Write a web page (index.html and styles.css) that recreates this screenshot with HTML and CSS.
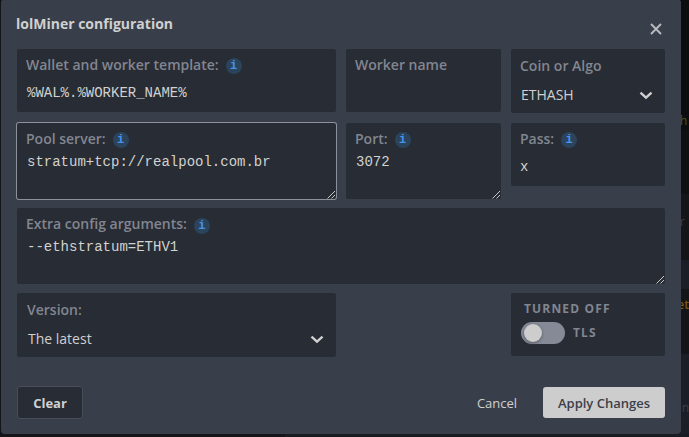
FILE: index.html
```html
<!DOCTYPE html>
<html lang="en">
<head>
<meta charset="utf-8">
<title>lolMiner configuration</title>
<link rel="stylesheet" href="styles.css">
</head>
<body>
<svg width="0" height="0" class="defs">
  <symbol id="grip" viewBox="0 0 9 9"><path d="M0.5 8.5L8 1M4.5 8.5L8 5" fill="none" stroke="#c8c8c8" stroke-width="1"/></symbol>
  <symbol id="chevron" viewBox="0 0 14 9"><path d="M1.5 1.6L7 6.6L12.5 1.6" fill="none" stroke="#d2d2d2" stroke-width="2.3"/></symbol>
</svg>
<div class="backdrop" aria-hidden="true">
  <span class="band band-a"></span>
  <span class="band band-b"></span>
  <span class="band band-c"></span>
  <span class="band band-d"></span>
  <span class="band band-e"></span>
  <span class="peek peek-green">h</span>
  <span class="peek peek-grey">r</span>
  <span class="peek peek-gold">et</span>
  <span class="peek peek-nin">in</span>
</div>
<main class="dialog">
  <header class="head">
    <h1>lolMiner configuration</h1>
    <svg class="close" viewBox="0 0 12 12"><path d="M1 1L11 11M11 1L1 11" fill="none" stroke="#b9bbbe" stroke-width="1.9"/></svg>
  </header>
  <form class="grid">
    <section class="field">
      <div class="label">Wallet and worker template:<i class="info">i</i></div>
      <div class="value">%WAL%.%WORKER_NAME%</div>
    </section>
    <section class="field"><div class="label">Worker name</div></section>
    <section class="field select">
      <div class="label">Coin or Algo</div>
      <div class="choice">ETHASH<svg class="chev"><use href="#chevron"/></svg></div>
    </section>

    <section class="field area focused">
      <div class="label">Pool server:<i class="info">i</i></div>
      <div class="value">stratum+tcp://realpool.com.br</div>
      <svg class="grip"><use href="#grip"/></svg>
    </section>
    <section class="field area">
      <div class="label">Port:<i class="info">i</i></div>
      <div class="value">3072</div>
      <svg class="grip"><use href="#grip"/></svg>
    </section>
    <section class="field pass">
      <div class="label">Pass:<i class="info">i</i></div>
      <div class="value">x</div>
    </section>

    <section class="field area wide">
      <div class="label">Extra config arguments:<i class="info">i</i></div>
      <div class="value">--ethstratum=ETHV1</div>
      <svg class="grip"><use href="#grip"/></svg>
    </section>

    <section class="field select">
      <div class="label">Version:</div>
      <div class="choice version">The latest<svg class="chev"><use href="#chevron"/></svg></div>
    </section>
    <section class="field tls">
      <div class="caps">TURNED OFF</div>
      <div class="switch-row"><span class="switch"></span><span class="caps">TLS</span></div>
    </section>
  </form>
  <footer class="foot">
    <button class="btn clear">Clear</button>
    <button class="btn cancel">Cancel</button>
    <button class="btn apply">Apply Changes</button>
  </footer>
</main>
</body>
</html>
```

FILE: styles.css
```css
* { box-sizing: border-box; }
body {
  margin: 0;
  width: 689px;
  height: 437px;
  overflow: hidden;
  background: #131519;
  font: 14px/20px "Open Sans", "Noto Sans", sans-serif;
  color: #d0d0d0;
}
.defs { position: absolute; }
.backdrop { position: absolute; inset: 0; overflow: hidden; }
.band { position: absolute; left: 680px; right: 0; }
.band-a { top: 0; height: 130px; background: #0c0d0f; }
.band-b { top: 130px; height: 64px; background: #0f1012; }
.band-c { top: 260px; height: 29px; background: #1b1e26; }
.band-d { top: 353px; height: 84px; background: #1b1e26; border-top: 1px solid #15161a; }
.band-e { left: 285px; top: 434px; height: 3px; background: #191c23; }
.peek { position: absolute; font-size: 12px; white-space: nowrap; }
.peek-green { top: 111px; left: 680px; color: #41591c; }
.peek-grey { top: 212px; left: 680px; color: #3b3c3f; }
.peek-gold { top: 295px; right: 0; color: #7b5709; font-weight: 600; }
.peek-nin { top: 398px; right: 0; color: #3c3f45; }

.dialog {
  position: relative;
  width: 680px;
  height: 434px;
  margin-left: 1px;
  padding: 0 16px;
  background: #393f4a;
  border-radius: 2px 2px 4px 4px;
}
.head { display: flex; justify-content: space-between; height: 49px; padding-top: 14px; }
h1 { margin: 0 0 0 -1px; font-size: 14px; line-height: 20px; font-weight: 700; }
.close { width: 12px; height: 12px; margin: 9px 3px 0 0; }

.grid {
  display: grid;
  grid-template-columns: 319px 155px 154px;
  grid-template-rows: 65px 76px 76px 64px;
  column-gap: 10px;
  row-gap: 9px;
  align-items: start;
}
.field {
  position: relative;
  height: 63px;
  padding: 6px 9px 0;
  background: #282c34;
  border-radius: 2px;
}
.area { height: 76px; }
.focused { box-shadow: 0 0 0 1px #8b909c; }
.wide { grid-column: 1 / -1; }
.label { display: flex; align-items: center; color: #828691; font-weight: 600; white-space: nowrap; }
.info {
  width: 16px;
  height: 16px;
  margin: 2px 0 0 7px;
  border-radius: 50%;
  background: #2b445c;
  color: #4592ec;
  font: 700 12px/17px "Liberation Mono", monospace;
  text-align: center;
}
.wide .info { margin-top: 3px; margin-bottom: -1px; }
.value { margin: 8px 0 0 1px; font: 14px/20px "Liberation Mono", monospace; color: #d2d2ce; white-space: nowrap; }
.area .value { margin-top: 3px; }
.pass .value { margin-left: 0; }
.grip { position: absolute; right: 0; bottom: 0; width: 9px; height: 9px; }
.select { height: 64px; padding-top: 7px; padding-left: 10px; }
.grid > :nth-child(3) { padding-left: 9px; }
.choice { display: flex; justify-content: space-between; align-items: center; margin-top: 9px; padding-left: 1px; padding-right: 3px; }
.chev { width: 14px; height: 9px; }
.tls { grid-column: 3; padding: 6px 10px 0; }
.caps { padding-left: 3px; font-size: 12px; line-height: 20px; font-weight: 700; letter-spacing: 1.15px; color: #828691; }
.switch-row { display: flex; align-items: center; gap: 5px; margin-top: 3px; height: 22px; }
.switch { width: 44px; height: 22px; padding: 2px 3px; border-radius: 11px; background: #858a96; }
.switch::before {
  content: "";
  display: block;
  width: 18px;
  height: 18px;
  border-radius: 50%;
  background: #cdcdcd;
  box-shadow: 0 1px 3px #555a64;
}
.foot { display: flex; align-items: center; margin-top: 29px; height: 33px; }
.btn { padding: 0; border: 0; border-radius: 3px; font: 13px/20px "Open Sans", sans-serif; color: #d0d0d0; background: none; }
.clear { width: 66px; height: 33px; border: 1px solid #494d57; background: #282c34; font-weight: 700; }
.cancel { width: 60px; height: 31px; margin-left: auto; margin-right: 16px; }
.apply { width: 122px; height: 31px; background: #cdcdcd; color: #3a3f4b; font-weight: 600; }
```
